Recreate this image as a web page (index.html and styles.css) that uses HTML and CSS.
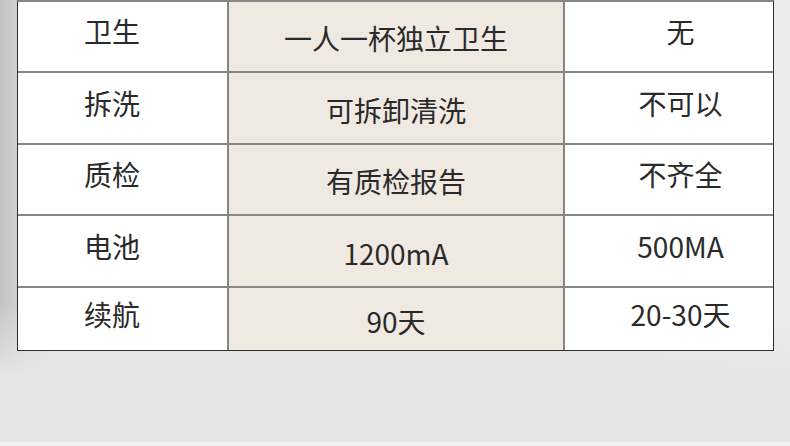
FILE: index.html
```html
<!DOCTYPE html>
<html lang="zh-CN">
<head>
<meta charset="utf-8">
<title>对比</title>
<link rel="stylesheet" href="styles.css">
</head>
<body>
<div class="page">
  <div class="table">
    <div class="row">
      <div class="cell c1">卫生</div>
      <div class="cell c2">一人一杯独立卫生</div>
      <div class="cell c3">无</div>
    </div>
    <div class="row">
      <div class="cell c1">拆洗</div>
      <div class="cell c2">可拆卸清洗</div>
      <div class="cell c3">不可以</div>
    </div>
    <div class="row r3">
      <div class="cell c1">质检</div>
      <div class="cell c2">有质检报告</div>
      <div class="cell c3">不齐全</div>
    </div>
    <div class="row">
      <div class="cell c1">电池</div>
      <div class="cell c2">1200mA</div>
      <div class="cell c3">500MA</div>
    </div>
    <div class="row last">
      <div class="cell c1">续航</div>
      <div class="cell c2">90天</div>
      <div class="cell c3">20-30天</div>
    </div>
  </div>
</div>
</body>
</html>
```

FILE: styles.css
```css
html, body {
  margin: 0;
  padding: 0;
}
body {
  width: 790px;
  height: 446px;
  overflow: hidden;
  font-family: "Noto Sans CJK SC", "Noto Sans", sans-serif;
  color: #2a2a2a;
  background:
    linear-gradient(to bottom, rgba(242,242,240,0) 0, rgba(242,242,240,0) 441px, #f1f1ef 442px),
    linear-gradient(to bottom, rgba(232,232,232,0) 0, rgba(232,232,232,0) 300px, #e6e6e6 380px),
    linear-gradient(to right, #c2c2c2 0, #cfcfcf 17px, #e6e6e6 60px, #e9e9e9 700px, #ececec 790px);
}
.page {
  padding-left: 17px;
}
.table {
  width: 755px;
  border-left: 1px solid #2e2e2e;
  border-right: 1px solid #2e2e2e;
  border-bottom: 1px solid #2e2e2e;
  border-top: 2px solid #878787;
}
.row {
  display: grid;
  grid-template-columns: 211px 336px 208px;
  height: 70px;
  border-bottom: 2px solid #878787;
}
.row.r3 {
  height: 69px;
}
.row:first-child {
  height: 69px;
}
.row.last {
  height: 62px;
  border-bottom: none;
}
.cell {
  display: flex;
  align-items: center;
  justify-content: center;
  font-size: 28px;
  line-height: 1;
  white-space: nowrap;
}
.c1 {
  background: #ffffff;
  border-right: 2px solid #858585;
  padding-right: 21px;
  padding-bottom: 11px;
}
.c2 {
  background: #efe9e2;
  border-right: 2px solid #858585;
  padding-top: 3px;
}
.c3 {
  background: #ffffff;
  padding-left: 23px;
  padding-bottom: 11px;
}
```
